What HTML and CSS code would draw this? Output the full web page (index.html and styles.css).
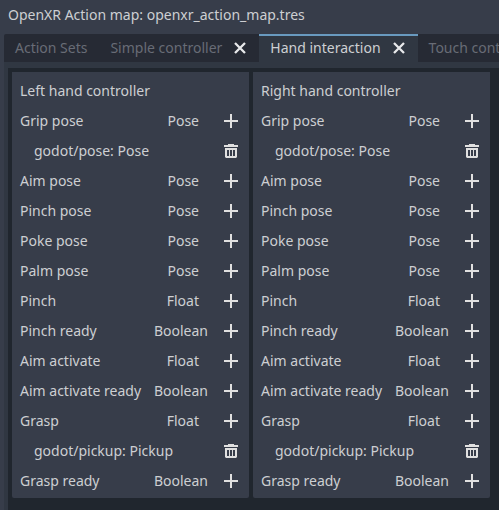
FILE: index.html
```
<!DOCTYPE html>
<html lang="en"><head><meta charset="utf-8"><title>OpenXR Action map</title><link rel="stylesheet" href="styles.css"></head>
<body>
<header class="title">OpenXR Action map: openxr_action_map.tres</header>
<nav class="tabs">
<div class="tab first">Action Sets</div>
<div class="tab">Simple controller<svg class="close" viewBox="0 0 16 16"><path d="M3 3l10 10M13 3L3 13"/></svg></div>
<div class="tab active">Hand interaction<svg class="close" viewBox="0 0 16 16"><path d="M3 3l10 10M13 3L3 13"/></svg></div>
<div class="tab last">Touch controller</div>
</nav>
<div class="frame"><main class="content" id="content"></main></div>
<script src="app.js"></script>
</body></html>
```
FILE: styles.css
```
* { box-sizing: border-box; }
body { margin: 0; width: 499px; height: 510px; overflow: hidden; background: #373d4a; color: #cdcfd2; font: 14px/30px "Noto Sans", sans-serif; white-space: nowrap; }
.title { height: 34px; padding-left: 8px; }
.tabs { display: flex; height: 28px; margin-left: 4px; line-height: 28px; border-top-left-radius: 2px; overflow: hidden; }
.tab { display: flex; align-items: center; padding: 0 11px; background: #262a34; color: #686c76; flex: none; }
.tab.first { padding-right: 12px; }
.tab.active { background: #303742; color: #cdcfd2; box-shadow: inset 0 2px #699abf; }
.tab.last { flex: 1; min-width: 0; }
.close { width: 16px; height: 16px; margin-left: 10px; stroke: #e8e9eb; stroke-width: 2.3; fill: none; }
.frame { height: 448px; margin-left: 4px; padding: 6px 0 0 4px; background: #303742; }
.content { display: flex; gap: 4px; height: 442px; padding: 4px; background: #20262e; }
.panel { width: 237px; height: 426px; flex: none; padding: 4px 8px; background: #373d4a; border-radius: 0 0 2px 2px; }
.row { display: flex; align-items: center; height: 30px; }
.name { flex: 1; }
.sub { padding-left: 14px; }
.type { margin-right: 24px; }
.type.wide { margin-right: 15px; }
.icon { width: 16px; height: 16px; margin-right: 2px; stroke: #e0e0e0; stroke-width: 2; fill: none; }
```
FILE: app.js
```
const plus = '<svg class="icon" viewBox="0 0 16 16"><path d="M8 1v14M1 8h14"/></svg>';
const trash = '<svg class="icon" viewBox="0 0 16 16"><path fill="#e0e0e0" stroke="none" fill-rule="evenodd" d="M5 1h6v1h4v2H1V2h4zM2 5h12v9l-1 1H3l-1-1zM4 7v6h2V7zM7 7v6h2V7zM10 7v6h2V7z"/></svg>';
const rows = [["Grip pose","Pose"],["godot/pose: Pose"],["Aim pose","Pose"],["Pinch pose","Pose"],["Poke pose","Pose"],["Palm pose","Pose"],["Pinch","Float"],["Pinch ready","Boolean"],["Aim activate","Float"],["Aim activate ready","Boolean"],["Grasp","Float"],["godot/pickup: Pickup"],["Grasp ready","Boolean"]];
document.getElementById("content").innerHTML = ["Left","Right"].map(side => `<section class="panel"><div class="row">${side} hand controller</div>` + rows.map(([n,t]) => `<div class="row"><span class="name${t ? "" : " sub"}">${n}</span>${t ? `<span class="type${t === "Boolean" ? " wide" : ""}">${t}</span>${plus}` : trash}</div>`).join("") + "</section>").join("");
```
